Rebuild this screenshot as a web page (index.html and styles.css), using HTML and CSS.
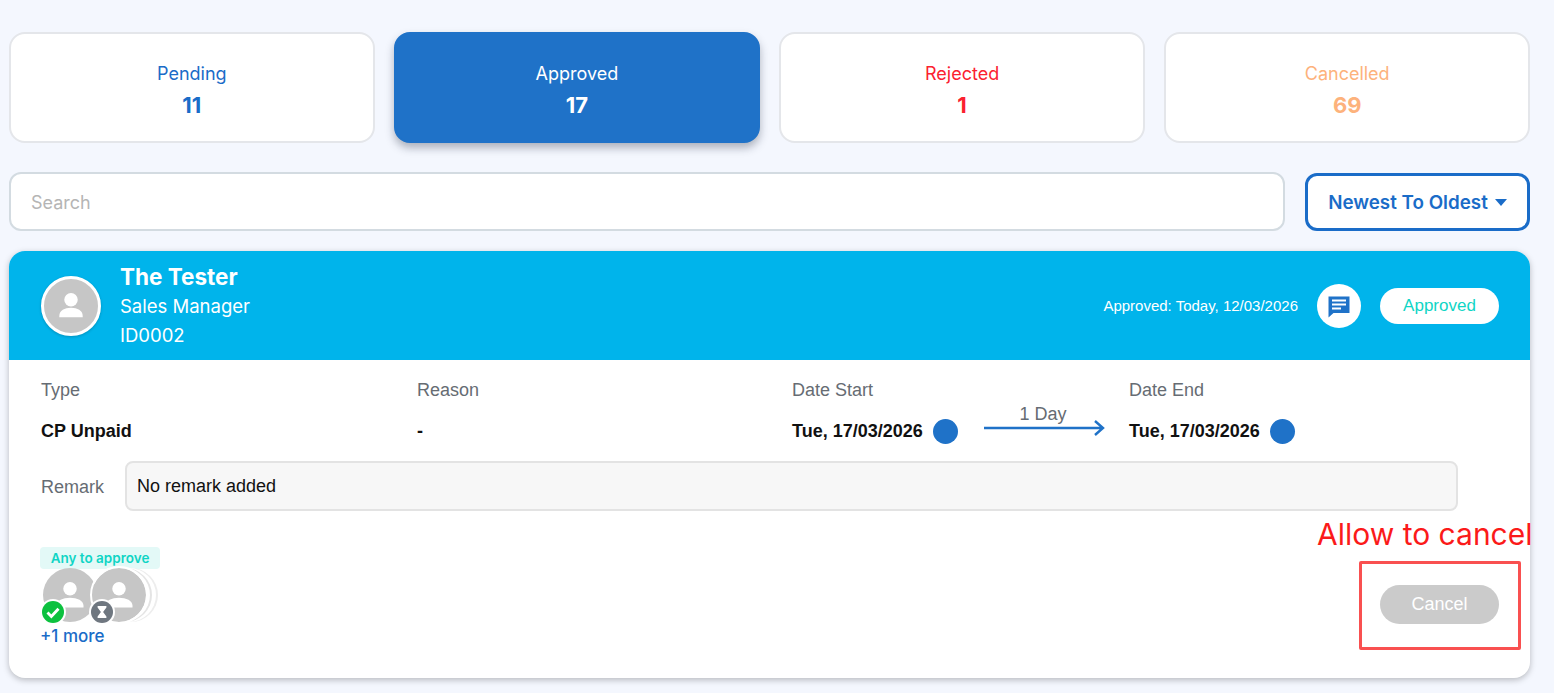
FILE: index.html
```html
<!DOCTYPE html>
<html lang="en">
<head>
    <meta charset="UTF-8">
    <meta name="viewport" content="width=device-width, initial-scale=1.0">
    <title>Leave Requests</title>
    <link rel="stylesheet" href="styles.css">
</head>
<body>
    <div class="tabs">
        <div class="tab tab-pending"><span class="tab-label">Pending</span><span class="tab-count">11</span></div>
        <div class="tab tab-approved"><span class="tab-label">Approved</span><span class="tab-count">17</span></div>
        <div class="tab tab-rejected"><span class="tab-label">Rejected</span><span class="tab-count">1</span></div>
        <div class="tab tab-cancelled"><span class="tab-label">Cancelled</span><span class="tab-count">69</span></div>
    </div>

    <div class="toolbar">
        <div class="search">Search</div>
        <div class="sort">Newest To Oldest <span class="caret"></span></div>
    </div>

    <div class="request">
        <div class="request-header">
            <div class="avatar avatar-large">
                <svg viewBox="0 0 60 60"><circle cx="30" cy="23" r="7.5" fill="#fff"/><path d="M17 41c0-6 6-9 13-9s13 3 13 9v1.500H17z" fill="#fff"/></svg>
            </div>
            <div class="person">
                <div class="person-name">The Tester</div>
                <div class="person-line">Sales Manager</div>
                <div class="person-line">ID0002</div>
            </div>
            <div class="approved-date">Approved: Today, 12/03/2026</div>
            <div class="comment-btn">
                <svg viewBox="0 0 24 24" width="24" height="24"><path d="M1.500 2.500h21v16.500H6.500L1.500 23.500z" fill="#1f72c8"/><path d="M5 6.500h14M5 10.500h14M5 14.500h9" stroke="#fff" stroke-width="1.800"/></svg>
            </div>
            <div class="status-pill">Approved</div>
        </div>

        <div class="request-body">
            <div class="details">
                <div class="col col-type">
                    <div class="field-label">Type</div>
                    <div class="field-value">CP Unpaid</div>
                </div>
                <div class="col col-reason">
                    <div class="field-label">Reason</div>
                    <div class="field-value">-</div>
                </div>
                <div class="col col-start">
                    <div class="field-label">Date Start</div>
                    <div class="field-value">Tue, 17/03/2026 <span class="dot"></span></div>
                </div>
                <div class="duration">
                    <div class="duration-text">1 Day</div>
                    <svg width="122" height="18" viewBox="0 0 122 18"><path d="M0 9h119M111 2l8 7-8 7" fill="none" stroke="#1f72c8" stroke-width="2.400"/></svg>
                </div>
                <div class="col">
                    <div class="field-label">Date End</div>
                    <div class="field-value">Tue, 17/03/2026 <span class="dot"></span></div>
                </div>
            </div>

            <div class="remark-row">
                <div class="remark-label">Remark</div>
                <div class="remark-box">No remark added</div>
            </div>

            <div class="request-footer">
                <div class="approvers">
                    <div class="any-tag">Any to approve</div>
                    <div class="approver-stack">
                        <div class="avatar avatar-small">
                            <svg viewBox="0 0 60 60"><circle cx="30" cy="23" r="7.500" fill="#fff"/><path d="M15 42c0-6 7-9 15-9s15 3 15 9v2H15z" fill="#fff"/></svg>
                            <span class="badge badge-ok">
                                <svg viewBox="0 0 20 20"><circle cx="10" cy="10" r="10" fill="#0cc13f"/><path d="M5 10.500l3.500 3.500 6.500-7" fill="none" stroke="#fff" stroke-width="2.600"/></svg>
                            </span>
                        </div>
                        <div class="avatar avatar-small avatar-second">
                            <svg viewBox="0 0 60 60"><circle cx="30" cy="23" r="7.500" fill="#fff"/><path d="M15 42c0-6 7-9 15-9s15 3 15 9v2H15z" fill="#fff"/></svg>
                            <span class="badge badge-wait">
                                <svg viewBox="0 0 20 20"><circle cx="10" cy="10" r="10" fill="#6f7780"/><path d="M6 4.500h8v1.500l-3 4 3 4v1.500H6V14l3-4-3-4z" fill="#fff"/></svg>
                            </span>
                        </div>
                    </div>
                    <div class="more-link">+1 more</div>
                </div>
                <div class="cancel-btn">Cancel</div>
            </div>
        </div>
    </div>

    <!-- annotation drawn on top of the screenshot -->
    <div class="note-text">Allow to cancel</div>
    <div class="note-box"></div>
</body>
</html>
```

FILE: styles.css
```css
html, body {
    height: 693px;
    overflow: hidden;
}
body {
    font-family: 'Inter', 'Liberation Sans', sans-serif;
    background-color: #f4f7fe;
    margin: 0;
    padding: 32px 24px 0 9px;
    position: relative;
    box-sizing: border-box;
}
.tabs {
    display: flex;
    gap: 19.500px;
}
.tab {
    flex: 1;
    height: 111px;
    box-sizing: border-box;
    background-color: #fff;
    border: 2px solid #e4e6ea;
    border-radius: 16px;
    display: flex;
    flex-direction: column;
    align-items: center;
    justify-content: center;
    gap: 7px;
    padding-top: 6px;
}
.tab-label {
    font-size: 18px;
    line-height: 22px;
}
.tab-count {
    font-size: 22px;
    line-height: 26px;
    font-weight: 700;
}
.tab-pending { color: #1a6cc8; }
.tab-approved {
    color: #fff;
    background-color: #1f72c8;
    border-color: #1f72c8;
    box-shadow: 0 5px 8px rgba(40, 50, 70, 0.35);
}
.tab-rejected { color: #fb2130; }
.tab-cancelled { color: #fdb27c; }
.toolbar {
    display: flex;
    align-items: flex-end;
    gap: 20px;
    margin-top: 29px;
}
.search {
    flex: 1;
    height: 59px;
    box-sizing: border-box;
    background-color: #fff;
    border: 2px solid #d3dbe1;
    border-radius: 12px;
    padding-left: 20px;
    font-size: 18px;
    line-height: 57px;
    color: #b5b5b5;
}
.sort {
    width: 225px;
    height: 58px;
    box-sizing: border-box;
    background-color: #fff;
    border: 3px solid #1a6cc8;
    border-radius: 12px;
    font-size: 18.800px;
    font-weight: 600;
    color: #1a6cc8;
    display: flex;
    align-items: center;
    justify-content: center;
    gap: 7px;
}
.caret {
    width: 0;
    height: 0;
    border-left: 6.500px solid transparent;
    border-right: 6.500px solid transparent;
    border-top: 7px solid #1a6cc8;
}
.request {
    margin-top: 20px;
    height: 427px;
    background-color: #fff;
    border-radius: 16px;
    overflow: hidden;
    box-shadow: 0 2px 6px rgba(0, 0, 0, 0.25);
}
.request-header {
    height: 109px;
    background-color: #00b4eb;
    color: #fff;
    display: flex;
    align-items: center;
    padding: 0 31px 0 32px;
}
.avatar {
    border-radius: 50%;
    background-color: #c6c6c6;
    position: relative;
    flex: none;
}
.avatar svg {
    display: block;
}
.avatar-large {
    width: 60px;
    height: 60px;
    box-sizing: border-box;
    border: 3px solid #fff;
    box-shadow: 0 1px 3px rgba(0, 0, 0, 0.2);
}
.avatar-large svg {
    width: 54px;
    height: 54px;
}
.person {
    margin-left: 19px;
    flex: 1;
}
.person-name {
    font-size: 22.500px;
    line-height: 30px;
    font-weight: 700;
}
.person-line {
    font-size: 18.500px;
    line-height: 29px;
}
.approved-date {
    font-family: 'Liberation Sans', sans-serif;
    font-size: 15px;
}
.comment-btn {
    width: 44px;
    height: 44px;
    margin-left: 19px;
    border-radius: 50%;
    background-color: #fff;
    display: flex;
    align-items: center;
    justify-content: center;
}
.status-pill {
    width: 119px;
    height: 36px;
    margin-left: 19px;
    border-radius: 18px;
    background-color: #fff;
    color: #0fd5c5;
    font-family: 'Liberation Sans', sans-serif;
    font-size: 17px;
    line-height: 36px;
    text-align: center;
}
.request-body {
    padding: 0 31px 0 32px;
    font-family: 'Liberation Sans', sans-serif;
}
.details {
    display: flex;
    padding-top: 19px;
}
.col-type {
    width: 376px;
}
.col-reason {
    width: 375px;
}
.col-start {
    width: 192px;
}
.field-label {
    font-size: 18px;
    line-height: 22px;
    color: #666c73;
}
.field-value {
    margin-top: 18px;
    height: 25px;
    font-size: 18px;
    font-weight: 700;
    color: #111;
    display: flex;
    align-items: center;
    gap: 10px;
}
.dot {
    width: 25px;
    height: 25px;
    border-radius: 50%;
    background-color: #1f72c8;
}
.duration {
    width: 145px;
    padding-top: 24px;
}
.duration svg {
    display: block;
    margin-top: -7px;
}
.duration-text {
    width: 118px;
    text-align: center;
    font-size: 18px;
    line-height: 23px;
    color: #666c73;
}
.remark-row {
    display: flex;
    align-items: center;
    margin-top: 17px;
}
.remark-label {
    width: 84px;
    font-size: 18px;
    color: #666c73;
    padding-top: 2px;
}
.remark-box {
    width: 1333px;
    height: 50px;
    box-sizing: border-box;
    background-color: #f7f7f7;
    border: 2px solid #e3e3e3;
    border-radius: 8px;
    padding-left: 10px;
    font-size: 18px;
    line-height: 46px;
    color: #111;
}
.request-footer {
    display: flex;
    justify-content: space-between;
    align-items: flex-start;
    margin-top: 36px;
    margin-left: -1px;
}
.any-tag {
    width: 120px;
    height: 22px;
    background-color: #e3f9f7;
    border-radius: 4px;
    font-family: 'Inter', sans-serif;
    font-size: 13.500px;
    font-weight: 600;
    line-height: 22px;
    text-align: center;
    color: #0fd5c5;
}
.approver-stack {
    display: flex;
    margin-top: -1px;
    margin-left: 3px;
}
.avatar-small {
    width: 54px;
    height: 54px;
}
.avatar-small svg {
    width: 54px;
    height: 54px;
}
.avatar-second {
    margin-left: -5px;
    outline: 2px solid #fff;
    box-shadow: 4px 0 0 #fff, 6px 0 0 #e4e4e4, 10px 0 0 #fff, 12px 0 0 #ededed;
}
.badge {
    position: absolute;
    left: -3px;
    bottom: -3px;
    width: 26px;
    height: 26px;
    border-radius: 50%;
    background-color: #fff;
    display: flex;
    align-items: center;
    justify-content: center;
}
.badge svg {
    width: 22px;
    height: 22px;
}
.more-link {
    font-family: 'Inter', sans-serif;
    font-size: 17px;
    font-weight: 500;
    line-height: 20px;
    color: #1a6cc8;
    margin-top: 4px;
}
.cancel-btn {
    width: 119px;
    height: 39px;
    margin-top: 38px;
    border-radius: 20px;
    background-color: #cbcbcb;
    color: #fff;
    font-size: 18px;
    line-height: 39px;
    text-align: center;
}
.note-text {
    position: absolute;
    left: 1317px;
    top: 515px;
    font-size: 30px;
    line-height: 38px;
    color: #fb1a1a;
    white-space: nowrap;
}
.note-box {
    position: absolute;
    left: 1359px;
    top: 561px;
    width: 162px;
    height: 89px;
    box-sizing: border-box;
    border: 3px solid #f95050;
    border-radius: 2px;
}
```
